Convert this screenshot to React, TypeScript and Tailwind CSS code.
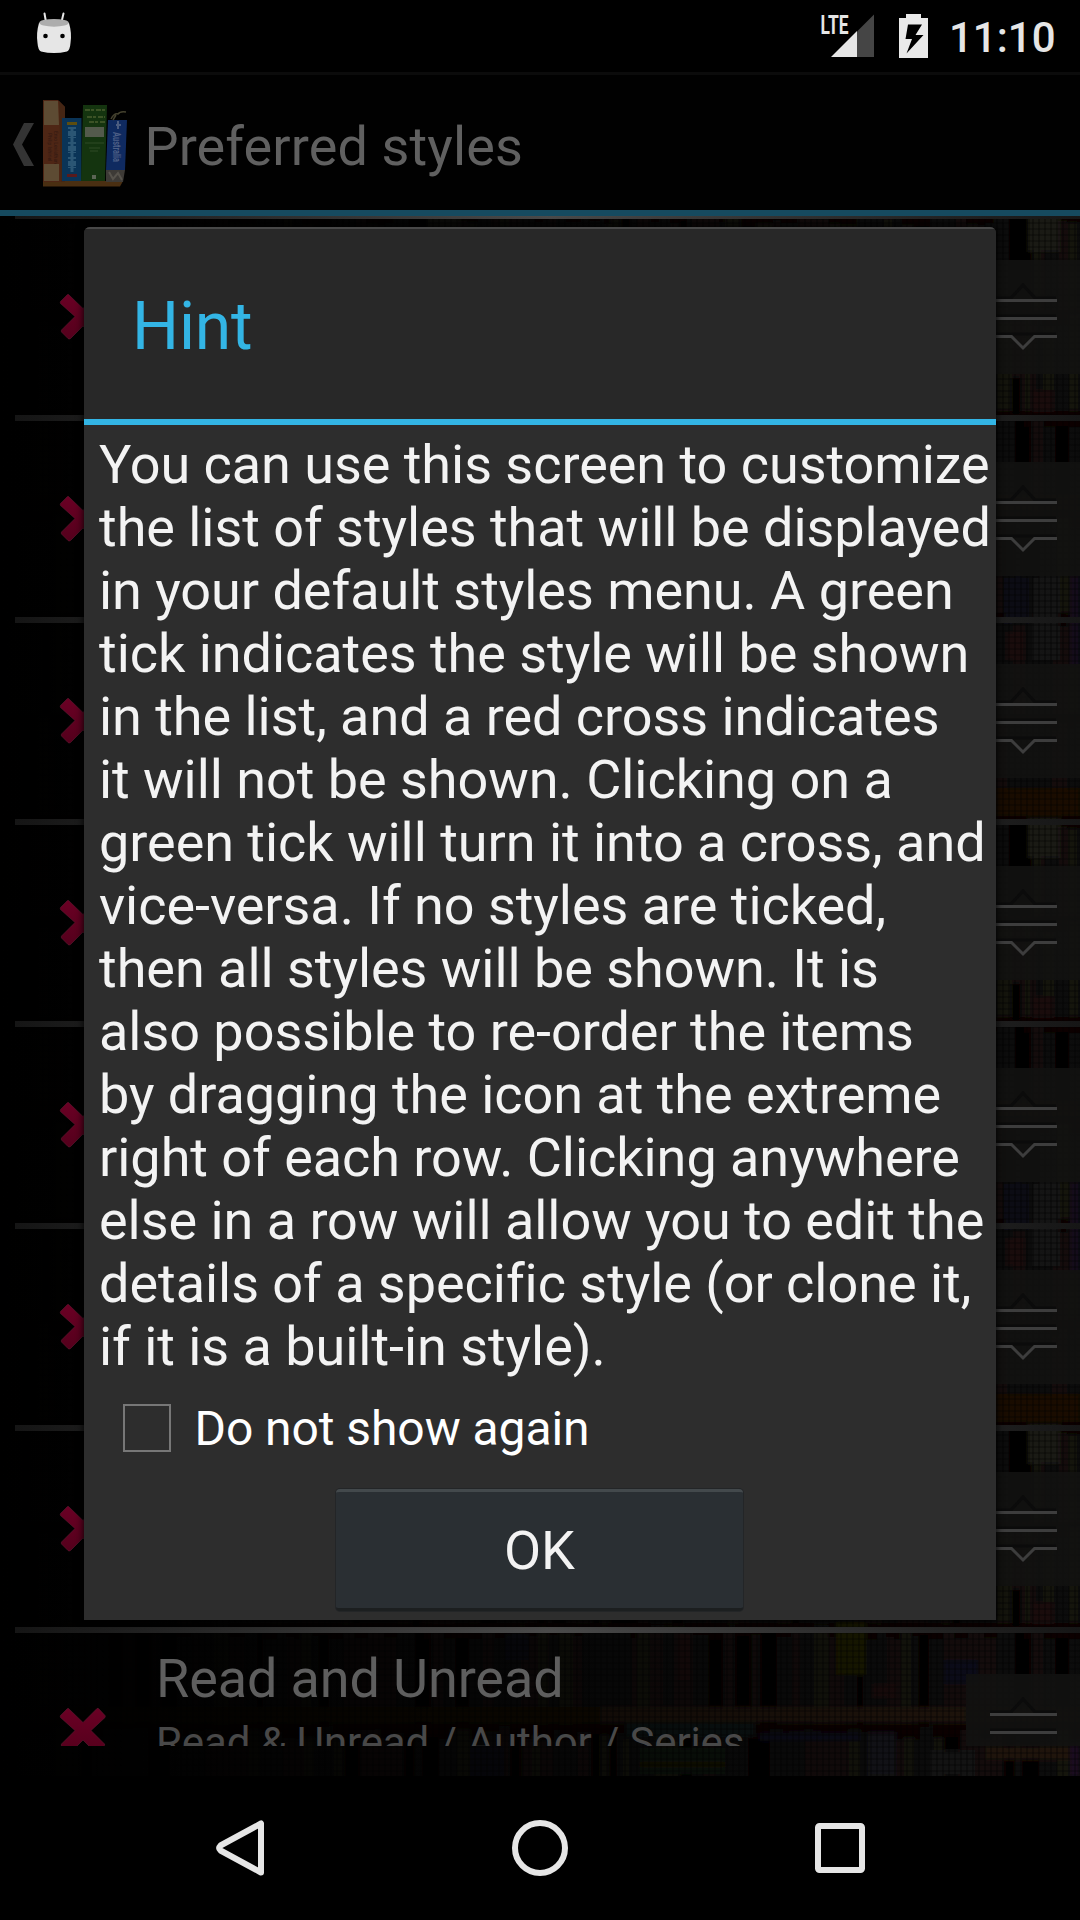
const HINT_LINES = [
  "You can use this screen to customize",
  "the list of styles that will be displayed",
  "in your default styles menu. A green",
  "tick indicates the style will be shown",
  "in the list, and a red cross indicates",
  "it will not be shown. Clicking on a",
  "green tick will turn it into a cross, and",
  "vice-versa. If no styles are ticked,",
  "then all styles will be shown. It is",
  "also possible to re-order the items",
  "by dragging the icon at the extreme",
  "right of each row. Clicking anywhere",
  "else in a row will allow you to edit the",
  "details of a specific style (or clone it,",
  "if it is a built-in style).",
];

type Book = { x: number; y: number; w: number; h: number; c: string };

// Deterministic pseudo-random spines, so the shelf is the same on every render.
function makeBooks(): Book[] {
  let seed = 11;
  const rnd = () => {
    seed = (seed * 16807) % 2147483647;
    return seed / 2147483647;
  };
  const colors = ["#12110d", "#17140f", "#0a0908", "#0f1010", "#191510", "#0e0d0b", "#14110c", "#060606", "#100f11", "#17110b"];
  const books: Book[] = [];
  for (let y = 0; y < 606; y += 101) {
    let x = 0;
    while (x < 600) {
      const w = 4 + rnd() * 12;
      const top = rnd() * 14;
      books.push({ x, y: y + top, w, h: 98 - top, c: colors[Math.floor(rnd() * colors.length)] });
      x += w + 1;
    }
  }
  return books;
}

const BOOKS = makeBooks();

function Backdrop() {
  return (
    <svg className="absolute inset-0" width="1080" height="1560" viewBox="0 216 1080 1560">
      <defs>
        <pattern id="shelf" x="0" y="212" width="600" height="606" patternUnits="userSpaceOnUse">
          <rect width="600" height="606" fill="#070605" />
          {BOOKS.map((b, i) => (
            <rect key={i} x={b.x} y={b.y} width={b.w} height={b.h} fill={b.c} />
          ))}
          <rect x="0" y="283" width="600" height="15" fill="#150b03" />
          <rect x="385" y="576" width="215" height="28" fill="#1c1006" />
          <rect x="428" y="0" width="32" height="40" fill="#1d1a14" />
          <rect x="410" y="14" width="14" height="30" fill="#030303" />
          <rect x="412" y="166" width="8" height="36" fill="#030303" />
          <rect x="432" y="178" width="22" height="22" fill="#1c0d0b" />
          <rect x="404" y="364" width="26" height="48" fill="#0e0e14" />
          <rect x="432" y="364" width="28" height="84" fill="#171517" />
          <rect x="470" y="364" width="14" height="90" fill="#180b1a" />
          <rect x="406" y="420" width="18" height="28" fill="#1c1109" />
        </pattern>
        <pattern id="weave" width="6" height="6" patternUnits="userSpaceOnUse">
          <rect width="2" height="6" fill="#000" fillOpacity=".3" />
          <rect width="6" height="2" fill="#000" fillOpacity=".25" />
        </pattern>
        <linearGradient id="fade">
          <stop offset="0" stopColor="#000" />
          <stop offset=".13" stopColor="#000" stopOpacity=".92" />
          <stop offset=".55" stopColor="#000" stopOpacity=".5" />
          <stop offset=".9" stopColor="#000" stopOpacity=".12" />
          <stop offset="1" stopColor="#000" stopOpacity=".05" />
        </linearGradient>
        <filter id="soft"><feGaussianBlur stdDeviation="2" /></filter>
        <filter id="softer"><feGaussianBlur stdDeviation=".7" /></filter>
      </defs>
      <g filter="url(#soft)">
        <rect y="206" width="1080" height="1580" fill="url(#shelf)" />
        <rect x="836" y="1622" width="30" height="53" fill="#1f1f05" />
        <rect x="944" y="1660" width="34" height="24" fill="#080e1e" />
        <rect x="872" y="1684" width="25" height="14" fill="#1d0707" />
        <rect x="678" y="1634" width="12" height="46" fill="#1a1007" />
        <rect x="505" y="1634" width="24" height="26" fill="#070d18" />
        <rect x="600" y="1707" width="366" height="15" fill="#241408" />
        <rect x="625" y="1723" width="130" height="14" fill="#0b1416" />
        <rect x="640" y="1748" width="85" height="26" fill="#0d120a" />
        <rect x="640" y="1762" width="85" height="5" fill="#1d1505" />
        <rect x="760" y="1733" width="100" height="8" fill="#080b1c" />
        <rect x="868" y="1732" width="28" height="44" fill="#15161a" />
        <rect x="930" y="1750" width="45" height="26" fill="#121318" />
        <rect x="985" y="1746" width="85" height="14" fill="#22150a" />
        <rect x="1070" y="1744" width="10" height="32" fill="#1a0d24" />
        <rect x="470" y="1746" width="34" height="30" fill="#110b19" />
      </g>
      <rect y="216" width="1080" height="1560" fill="url(#weave)" filter="url(#softer)" />
      <rect y="216" width="1080" height="1560" fill="url(#fade)" />
    </svg>
  );
}

function Cross() {
  return (
    <svg className="shrink-0" width="48" height="48" viewBox="0 0 48 48">
      <defs>
        <linearGradient id="crossFill" x1="0" y1="0" x2="0" y2="1">
          <stop offset="0" stopColor="#6a0024" />
          <stop offset="1" stopColor="#54001c" />
        </linearGradient>
      </defs>
      <path
        d="M9.500 1.500 24 15.500 38 1.500Q39 1 40 2L46 8.500Q46.500 9.500 46 10.500L32 23.500 45.500 37Q46 38 45 39L38.500 45.500Q37.500 46 36.500 45.500L24 33 11.500 45.500Q10 46.500 9 45.500L2.500 39Q2 38 2.500 37L16 23.500 1.500 10.500Q1 9.500 1.500 8.500L8 2Q9 1 9.500 1.500Z"
        fill="url(#crossFill)" stroke="#5e1a30" strokeWidth=".6"
      />
    </svg>
  );
}

function Grip() {
  return (
    <div className="flex h-[114px] w-[114px] shrink-0 items-center bg-[#121211]/90 pl-[22px]">
      <svg width="72" height="76" viewBox="0 0 72 76" fill="none">
        <path d="M2 19H23L35 6 47 19H68M2 37H68M2 55H68" stroke="#0b0b0b" strokeWidth="3" />
        <path d="M2 21.500H69M2 39.500H69M2 57.500H23.500L35 69 46.500 57.500H69" stroke="#3d3d3d" strokeWidth="3" />
      </svg>
    </div>
  );
}

function Row({ title, detail }: { title?: string; detail?: string }) {
  return (
    <div className="flex h-[202px] shrink-0 flex-col">
      <div className="flex h-[196px] items-center pl-[59px]">
        <Cross />
        <div className="h-full flex-1 pl-[49px]">
          {title && <div className="mt-[14px] text-[54px] leading-[63px] tracking-[-0.12px] text-[#5e5e5e]">{title}</div>}
          {detail && <div className="mt-[8px] text-[42px] leading-[50px] tracking-[-0.12px] text-[#484848]">{detail}</div>}
        </div>
        <Grip />
      </div>
      <div className="ml-[15px] h-[6px] bg-linear-to-r from-[#151515] via-[#4a4a4a] to-[#161616]" />
    </div>
  );
}

function StatusBar() {
  return (
    <div className="flex h-[72px] shrink-0 items-start bg-black text-[#e6e6e6]">
      <svg className="ml-[36px] mt-[12px]" width="36" height="43" viewBox="36 12 36 43">
        <path d="M44.500 13.500 46 22M63.500 13.500 61.500 22" stroke="#e6e6e6" strokeWidth="2" strokeLinecap="round" />
        <path d="M39 23Q36 33 37.500 43Q38 50 41 51.500Q54 54.500 67 51.500Q70 50 70.500 43Q72 33 69 23Z" fill="#e6e6e6" />
        <ellipse cx="54" cy="22.800" rx="14.800" ry="3.900" fill="#adadad" />
        <circle cx="45.500" cy="36" r="2.300" fill="#000" />
        <circle cx="62.500" cy="36" r="2.300" fill="#000" />
      </svg>
      <svg className="ml-auto" width="110" height="60" viewBox="820 0 110 60">
        <text x="820.500" y="33.500" fontSize="26" fontWeight="700" textLength="28" lengthAdjust="spacingAndGlyphs" fill="#e6e6e6">LTE</text>
        <path d="M831 57H857V31Z" fill="#e6e6e6" />
        <path d="M857 57H874V14.500L857 31.500Z" fill="#454545" />
        <path d="M899 58V18H906V14H921V18H928V58Z" fill="#eaeaea" />
        <path d="M908 24.500H922L915.500 35H923.500L906.500 53.500 912 39H905.500Z" fill="#000" />
      </svg>
      <div className="ml-[19px] mr-[24px] mt-[13px] w-[107px] whitespace-nowrap text-[42px] font-medium leading-[49px]">11:10</div>
    </div>
  );
}

function BookIcon() {
  return (
    <svg width="84" height="90" viewBox="42 100 84 90">
      <path d="M42 182H122L119 187.500H42Z" fill="#4a2f12" />
      <path d="M42 101H57L64 108V183H42Z" fill="#4e2615" />
      <path d="M43 102H57L58 126H43ZM43 165H58V182H43Z" fill="#5d4b33" />
      <path d="M58 102 64 108V183H60Z" fill="#452614" />
      <path d="M61 119H80.500V182H61Z" fill="#0a3457" />
      <path d="M66 123H76V126H66Z" fill="#5c4d10" />
      <path d="M66 175H76V178H66Z" fill="#581a1c" />
      <path d="M71 128V173" stroke="#2b5674" strokeWidth="8" strokeDasharray="2 2 5 1 1 4" />
      <path d="M71 128V173" stroke="#2b5674" strokeWidth="3" />
      <path d="M82 106H106L104 182H80Z" fill="#14340f" />
      <path d="M84 111H105M86 118H104M88 123H104" stroke="#3c5326" strokeWidth="2" strokeDasharray="5 1 3 2" />
      <path d="M84 128H103V138H84Z" fill="#535a4c" />
      <path d="M84 144H103M88 149H99M89 152H97" stroke="#2f4a26" strokeWidth="1.200" />
      <path d="M91 176H95V180H91Z" fill="#5c6555" />
      <path d="M107 121H126L124 171H105Z" fill="#0f2a60" />
      <path d="M105 171H124L122 183H105Z" fill="#3d3a36" />
      <path d="M108 173 112 180 117 174 121 181" stroke="#57534c" strokeWidth="2" fill="none" />
      <path d="M110 120Q113 114 117 115Q119 112 125 113M115 116 112 121" stroke="#45422f" strokeWidth="1.500" fill="none" />
      <path d="M117 122V130M115 126H120" stroke="#4b5c80" strokeWidth="2" />
      <text x="0" y="0" transform="translate(111.500 133) rotate(90)" fontSize="10" fontWeight="700" textLength="30" lengthAdjust="spacingAndGlyphs" fill="#4d5f86">Australia</text>
      <text x="0" y="0" transform="translate(47 134) rotate(90)" fontSize="5" fill="#301812">Philip Ishiriel</text>
      <text x="0" y="0" transform="translate(52.500 132) rotate(90)" fontSize="5" fill="#301812">Emo Leviathan</text>
    </svg>
  );
}

function ActionBar() {
  return (
    <div className="flex h-[144px] shrink-0 items-center border-b-[6px] border-t-[3px] border-b-[#164a5f] border-t-[#0b0b0b] bg-[#010101]">
      <svg className="ml-[13px] mt-[3px]" width="21" height="43" viewBox="0 0 21 43">
        <path d="M11 0H21L9 21.500 21 43H11L0 21.500Z" fill="#343434" />
      </svg>
      <div className="ml-[9px] mt-[3px]"><BookIcon /></div>
      <div className="ml-[17.500px] mt-[7px] whitespace-nowrap text-[54px] leading-[63px] tracking-[0.12px] text-[#606060]">Preferred styles</div>
    </div>
  );
}

function NavBar() {
  return (
    <div className="flex h-[144px] shrink-0 items-center bg-black">
      <svg className="ml-[210px]" width="60" height="60" viewBox="0 0 60 60" fill="none" stroke="#e6e6e6">
        <path d="M51 5.500V54.500L10.500 32.500Q8 30 10.500 27.500Z" strokeWidth="6" strokeLinejoin="round" />
      </svg>
      <svg className="ml-[240px]" width="60" height="60" viewBox="0 0 60 60" fill="none" stroke="#e6e6e6">
        <circle cx="30" cy="30" r="25" strokeWidth="6" />
      </svg>
      <svg className="ml-[240px]" width="60" height="60" viewBox="0 0 60 60" fill="none" stroke="#e6e6e6">
        <rect x="8" y="8" width="44" height="44" rx="1.500" strokeWidth="6" />
      </svg>
    </div>
  );
}

function HintDialog() {
  return (
    <div className="absolute left-[84px] top-[227px] flex h-[1393px] w-[912px] flex-col overflow-hidden rounded-t-[6px] bg-[#2d2d2d] shadow-[0_0_8px_#000]">
      <div className="flex h-[198px] shrink-0 items-center border-b-[6px] border-t-2 border-b-[#33b5e5] border-t-[#484848] bg-[#282828] pl-[48px] pt-[5px] text-[66px] leading-[78px] tracking-[-0.2px] text-[#33b5e5]">
        Hint
      </div>
      <div className="h-[957px] shrink-0 whitespace-nowrap pl-[15px] pt-[8px] text-[54px] leading-[63px] tracking-[-0.04px] text-[#f3f3f3]">
        {HINT_LINES.map((line) => (
          <div key={line}>{line}</div>
        ))}
      </div>
      <div className="flex h-[92px] shrink-0 items-center pl-[39px]">
        <div className="h-[48px] w-[48px] border-2 border-[#777777]" />
        <div className="ml-[23.500px] pt-[2px] text-[48px] leading-[56px] tracking-[-0.07px] text-white">Do not show again</div>
      </div>
      <div className="ml-[252px] mt-[15px] flex h-[122px] w-[407px] items-center justify-center rounded-[4px] border-b-[3px] border-t-[3px] border-b-[#1c1f20] border-t-[#43494c] bg-[#2a2f33] text-[54px] leading-[63px] text-[#f3f3f3] shadow-[0_0_0_1px_#232527]">
        OK
      </div>
    </div>
  );
}

export default function App() {
  return (
    <div className="relative flex h-[1920px] w-[1080px] flex-col overflow-hidden bg-black font-['Roboto',sans-serif]">
      <StatusBar />
      <ActionBar />
      <div className="relative h-[1560px] shrink-0 overflow-hidden">
        <Backdrop />
        <div className="relative flex h-[1530px] flex-col overflow-hidden">
          <div className="ml-[15px] h-[3px] shrink-0 bg-linear-to-r from-[#151515] via-[#4a4a4a] to-[#161616]" />
          {[0, 1, 2, 3, 4, 5, 6].map((i) => (
            <Row key={i} />
          ))}
          <Row title="Read and Unread" detail="Read & Unread / Author / Series" />
        </div>
      </div>
      <NavBar />
      <HintDialog />
    </div>
  );
}
